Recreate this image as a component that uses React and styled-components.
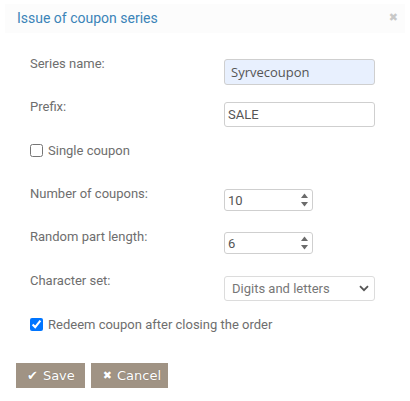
import styled, { createGlobalStyle } from 'styled-components';

const GlobalStyle = createGlobalStyle`
  html, body {
    margin: 0;
    padding: 0;
    background: #ffffff;
    font-family: Roboto, "Liberation Sans", sans-serif;
  }
`;

const Dialog = styled.div`
  width: 410px;
  height: 401px;
  background: #fff;
  box-sizing: border-box;
`;

const Header = styled.div`
  margin: 4px 5px 0;
  height: 29px;
  background: #fcfcfc;
  display: flex;
  align-items: center;
  justify-content: space-between;
  padding: 0 7px 0 12px;
`;

const Title = styled.div`
  font-size: 14px;
  color: #3b84b8;
  margin-top: -2px;
`;

const Close = styled.div`
  color: #c8c8c8;
  font-size: 11px;
  font-weight: bold;
  font-family: "DejaVu Sans", sans-serif;
  margin-top: -2px;
`;

const Form = styled.div`
  padding: 26px 0 0 30px;
  display: flex;
  flex-direction: column;
`;

const Row = styled.div`
  display: grid;
  grid-template-columns: 194px auto;
  align-items: start;
  margin-top: ${(p) => p.$gap || 0}px;
`;

const Label = styled.div`
  font-size: 13px;
  line-height: 16px;
  color: #6e6e6e;
  margin-top: -3px;
`;

const TextInput = styled.input`
  box-sizing: border-box;
  width: ${(p) => p.$width || 151}px;
  height: ${(p) => p.$height || 26}px;
  border: 1px solid #cfcfcf;
  border-radius: 3px;
  background: ${(p) => (p.$filled ? '#e8f0fe' : '#fff')};
  padding: 0 0 0 ${(p) => (p.$filled ? 6 : 3)}px;
  font-family: ${(p) => (p.$filled ? '"Open Sans", sans-serif' : 'Roboto, sans-serif')};
  font-size: 13px;
  color: #555;
  outline: none;
`;

const SpinWrap = styled.div`
  position: relative;
  width: 89px;
`;

const SpinArrows = styled.svg`
  position: absolute;
  right: 4px;
  top: 50%;
  transform: translateY(-50%);
`;

const SelectWrap = styled.div`
  position: relative;
  width: 151px;
`;

const Select = styled.select`
  appearance: none;
  box-sizing: border-box;
  width: 151px;
  height: 25px;
  border: 1px solid #dcdcdc;
  border-radius: 3px;
  background: #fff;
  padding: 0 0 0 7px;
  font-family: Roboto, sans-serif;
  font-size: 13px;
  color: #777;
  outline: none;
`;

const Chevron = styled.svg`
  position: absolute;
  right: 6px;
  top: 9px;
  pointer-events: none;
`;

const CheckRow = styled.label`
  display: flex;
  align-items: center;
  gap: 5px;
  font-size: 13px;
  color: #6e6e6e;
  margin-top: ${(p) => p.$gap || 0}px;
  height: 16px;
`;

const Check = styled.input`
  margin: 0;
  width: 13px;
  height: 13px;
`;

const Buttons = styled.div`
  display: flex;
  gap: 6px;
  margin: 31px 0 0 16px;
`;

const Button = styled.button`
  display: flex;
  align-items: center;
  gap: ${(p) => p.$gap || 5}px;
  height: 25px;
  padding: 0 ${(p) => p.$right || 10}px 0 ${(p) => p.$left || 11}px;
  border: none;
  border-radius: 0;
  background: #a09384;
  color: #fff;
  font-family: "DejaVu Sans", Verdana, sans-serif;
  font-size: 13px;
  text-shadow: 0 0 1px rgba(0, 0, 0, 0.25);
  cursor: pointer;
`;

const Glyph = styled.span`
  font-size: ${(p) => p.$size || 12}px;
`;

function Spinner({ value }) {
  return (
    <SpinWrap>
      <TextInput $width={89} $height={22} defaultValue={value} />
      <SpinArrows width="9" height="16" viewBox="0 0 9 16">
        <path d="M4.5 1.5 L8 6 L1 6 Z" fill="#6b6b6b" />
        <path d="M4.5 14.5 L8 10 L1 10 Z" fill="#6b6b6b" />
      </SpinArrows>
    </SpinWrap>
  );
}

export default function App() {
  return (
    <>
      <GlobalStyle />
      <Dialog>
        <Header>
          <Title>Issue of coupon series</Title>
          <Close>✖</Close>
        </Header>
        <Form>
          <Row>
            <Label>Series name:</Label>
            <TextInput $filled defaultValue="Syrvecoupon" />
          </Row>
          <Row $gap={17}>
            <Label>Prefix:</Label>
            <TextInput $height={25} defaultValue="SALE" />
          </Row>
          <CheckRow $gap={15}>
            <Check type="checkbox" />
            Single coupon
          </CheckRow>
          <Row $gap={31}>
            <Label>Number of coupons:</Label>
            <Spinner value="10" />
          </Row>
          <Row $gap={21}>
            <Label>Random part length:</Label>
            <Spinner value="6" />
          </Row>
          <Row $gap={22}>
            <Label>Character set:</Label>
            <SelectWrap>
              <Select defaultValue="dl">
                <option value="dl">Digits and letters</option>
                <option value="d">Digits</option>
                <option value="l">Letters</option>
              </Select>
              <Chevron width="10" height="7" viewBox="0 0 10 7">
                <path d="M1 1.2 L5 5.2 L9 1.2" stroke="#555" strokeWidth="1.8" fill="none" />
              </Chevron>
            </SelectWrap>
          </Row>
          <CheckRow $gap={15}>
            <Check type="checkbox" defaultChecked />
            Redeem coupon after closing the order
          </CheckRow>
        </Form>
        <Buttons>
          <Button>
            <Glyph $size={13}>✔</Glyph>Save
          </Button>
          <Button $left={12} $right={7} $gap={5}>
            <Glyph $size={11}>✖</Glyph>Cancel
          </Button>
        </Buttons>
      </Dialog>
    </>
  );
}
